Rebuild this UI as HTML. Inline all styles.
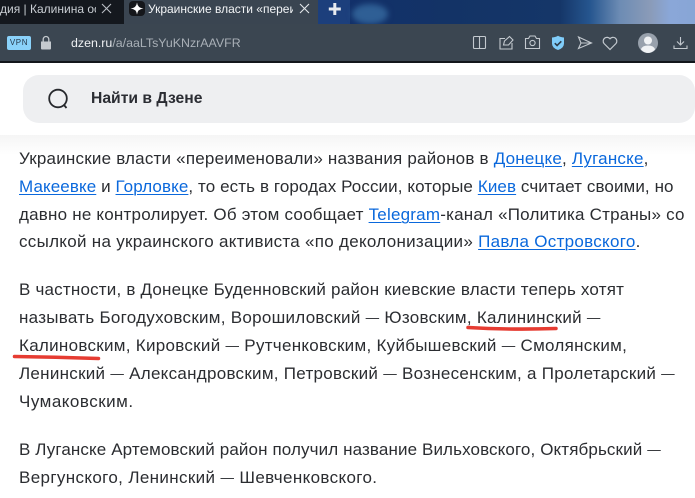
<!DOCTYPE html>
<html><head><meta charset="utf-8"><style>
html,body{margin:0;padding:0;background:#fff}
body{position:relative;width:695px;height:498px;overflow:hidden;font-family:"Liberation Sans",sans-serif}
div{position:absolute}
.l{left:19px;white-space:nowrap;font-size:17px;line-height:28px;height:28px;color:#2b2d31}
.l a{color:#0a68dc;text-decoration:underline;text-decoration-thickness:1px;text-underline-offset:2px}
.l i{font-style:normal;font-size:13.5px;position:relative;top:-1px}
svg{position:absolute;overflow:visible}
</style></head><body>
<div style="left:0;top:0;width:695px;height:24px;background:linear-gradient(90deg,#10306a 0,#12306a 340px,#133366 450px,#153668 560px,#26568f 590px,#6d8cb4 620px,#8a9bb8 650px,#8aa7d8 670px,#88a6d6 695px)"></div>
<div style="left:318px;top:0;width:32px;height:24px;background:#1c3f7c"></div>
<div style="left:352px;top:4px;width:36px;height:20px;border-radius:50%;background:#2f5f95;filter:blur(3px)"></div>
<div style="left:0;top:0;width:124px;height:24px;background:#14181e"></div>
<div style="left:124px;top:0;width:194px;height:24px;background:#3a4551"></div>
<div style="left:0;top:0;width:96px;height:19px;overflow:hidden;font-size:12px;line-height:19px;color:#c9ced3;white-space:nowrap">дия | Калинина ос</div>
<svg style="left:0;top:0" width="350" height="24" fill="none" stroke="#b9bec4" stroke-width="1.1"><path d="M102 4l9 9M111 4l-9 9"/><path d="M300 4l9 9M309 4l-9 9" stroke="#e4e7ea"/></svg>
<div style="left:129px;top:1px;width:16px;height:15px;border-radius:4px;background:#15171b"></div>
<svg style="left:129px;top:1px" width="16" height="15"><path d="M8 1.500Q8.600 7 14.500 7.500Q8.600 8 8 13.500Q7.400 8 1.500 7.500Q7.400 7 8 1.500Z" fill="#fff"/></svg>
<div style="left:148px;top:0;width:145px;height:19px;overflow:hidden;font-size:12px;line-height:19px;color:#f2f4f6;white-space:nowrap">Украинские власти «переи</div>
<svg style="left:328px;top:2px" width="14" height="14"><path d="M5.300 1h3v4.500h4.500v3H8.300v4.500h-3V8.500H.8v-3h4.500z" fill="#e8ebef"/></svg>
<div style="left:0;top:24px;width:695px;height:37px;background:#3b4651"></div>
<div style="left:0;top:61px;width:695px;height:2px;background:#12161b"></div>
<div style="left:7px;top:36px;width:24px;height:14px;border-radius:2px;background:#8ad2fa;color:#25384a;font-size:8px;line-height:14px;text-align:center;letter-spacing:.6px">VPN</div>
<svg style="left:40px;top:35px" width="12" height="15"><path d="M1 6.500h10v7a1 1 0 0 1-1 1H2a1 1 0 0 1-1-1z" fill="#c4c9ce"/><path d="M3.200 7V4.300a2.800 2.800 0 0 1 5.600 0V7" fill="none" stroke="#c4c9ce" stroke-width="1.300"/></svg>
<div style="left:71px;top:35px;font-size:12.400px;line-height:17px;color:#a9b0b7;white-space:nowrap"><span style="color:#eef0f2">dzen.ru</span>/a/aaLTsYuKNzrAAVFR</div>
<svg style="left:0;top:0" width="695" height="63" fill="none" stroke="#c3c9cf" stroke-width="1.100">
<path d="M473.500 37.500a1 1 0 0 1 1-1h10a1 1 0 0 1 1 1v10a1 1 0 0 1-1 1h-10a1 1 0 0 1-1-1zM479.500 36.500v12.500"/>
<path d="M505 38.500h-5v10.500h12v-6M503.500 45l1-4 5-4.500 3.500 3.500-4.500 5z"/>
<path d="M525.500 38.500h3l1.500-2.500h5l1.500 2.500h3v10h-14z"/><circle cx="532.500" cy="43" r="2.600"/>
<path d="M552 37.500q4-.5 6-1.800 2 1.300 6 1.800v6q0 4.500-6 6.500-6-2-6-6.500z" fill="#80cdfa" stroke="none"/><path d="M554.800 43.200l2.300 2.300 4.200-4.200" stroke="#2e3d4b" stroke-width="1.600"/>
<path d="M578.500 37l13 6-13 5.500 2.500-5.500zM581 43h10.500"/>
<path d="M610 49.500l-6-6a3.800 3.800 0 0 1 6-4.700 3.800 3.800 0 0 1 6 4.700z" stroke-width="1.200"/>
<path d="M680.500 37v8M677 41.500l3.500 3.500 3.500-3.500M674 45.500v3h13v-3"/>
</svg>
<svg style="left:638px;top:33px" width="20" height="20"><circle cx="10" cy="10" r="10" fill="#98a1ac"/><circle cx="10" cy="7.500" r="4" fill="#f0f2f4"/><path d="M3 16.500Q4 12.500 10 12.500T17 16.500Q14 20 10 20T3 16.500Z" fill="#f0f2f4"/></svg>
<div style="left:23px;top:75px;width:672px;height:48px;border-radius:16px;background:#eeeff1"></div>
<svg style="left:47px;top:88px" width="24" height="24" fill="none" stroke="#26282c" stroke-width="1.800"><circle cx="11" cy="10.500" r="8.800"/><path d="M17 17l2.500 3"/></svg>
<div style="left:91px;top:89px;font-size:15.700px;line-height:20px;font-weight:700;color:#2b2d33;white-space:nowrap">Найти в Дзене</div>
<div style="left:0;top:135px;width:695px;height:20px;background:linear-gradient(#f5f5f5,#fff)"></div>
<div class="l" style="top:145px;letter-spacing:.21px">Украинские власти «переименовали» названия районов в <a>Донецке</a>, <a>Луганске</a>,</div>
<div class="l" style="top:173px;letter-spacing:.1px"><a>Макеевке</a> и <a>Горловке</a>, то есть в городах России, которые <a>Киев</a> считает своими, но</div>
<div class="l" style="top:201px;letter-spacing:.21px">давно не контролирует. Об этом сообщает <a>Telegram</a>-канал «Политика Страны» со</div>
<div class="l" style="top:228px;letter-spacing:.29px">ссылкой на украинского активиста «по деколонизации» <a>Павла Островского</a>.</div>
<div class="l" style="top:276px;letter-spacing:.2px">В частности, в Донецке Буденновский район киевские власти теперь хотят</div>
<div class="l" style="top:304px;letter-spacing:.28px">называть Богодуховским, Ворошиловский <i>—</i> Юзовским, Калининский <i>—</i></div>
<div class="l" style="top:332px;letter-spacing:.29px">Калиновским, Кировский <i>—</i> Рутченковским, Куйбышевский <i>—</i> Смолянским,</div>
<div class="l" style="top:360px;letter-spacing:.28px">Ленинский <i>—</i> Александровским, Петровский <i>—</i> Вознесенским, а Пролетарский <i>—</i></div>
<div class="l" style="top:388px;letter-spacing:.5px">Чумаковским.</div>
<div class="l" style="top:436px;letter-spacing:.12px">В Луганске Артемовский район получил название Вильховского, Октябрьский <i>—</i></div>
<div class="l" style="top:464px;letter-spacing:.36px">Вергунского, Ленинский <i>—</i> Шевченковского.</div>
<svg style="left:0;top:0" width="695" height="498" fill="none" stroke="#e63c32" stroke-width="3.500" stroke-linecap="round"><path d="M14.500 356.500Q55 357 98.500 358.500"/><path d="M468 327.500Q510 330 556 328.500"/></svg>
</body></html>
